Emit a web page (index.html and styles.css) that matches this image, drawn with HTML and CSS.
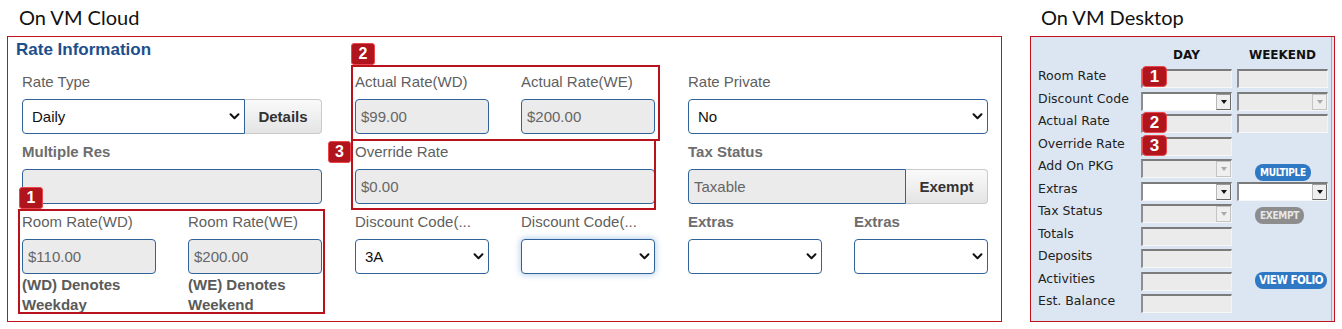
FILE: index.html
```html
<!DOCTYPE html>
<html lang="en">
<head>
    <meta charset="UTF-8">
    <title>Rate Information</title>
    <link rel="stylesheet" href="styles.css">
</head>
<body>
    <div class="page">
        <!-- Cloud version -->
        <section class="cloud">
            <h2 class="caption">On VM Cloud</h2>
            <div class="cloud-panel">
                <h3 class="panel-title">Rate Information</h3>

                <div class="cloud-grid">
                    <div class="col">
                        <div class="field">
                            <label>Rate Type</label>
                            <div class="combo">
                                <div class="select"><span>Daily</span><svg class="chev" viewBox="0 0 12 8"><path d="M1.5 1.5 6 6l4.5-4.5"/></svg></div>
                                <button class="addon">Details</button>
                            </div>
                        </div>
                        <div class="field">
                            <label class="strong">Multiple Res</label>
                            <div class="input"></div>
                        </div>
                        <div class="pair">
                            <div class="field">
                                <label>Room Rate(WD)</label>
                                <div class="input">$110.00</div>
                                <p class="note">(WD) Denotes Weekday</p>
                            </div>
                            <div class="field">
                                <label>Room Rate(WE)</label>
                                <div class="input">$200.00</div>
                                <p class="note">(WE) Denotes Weekend</p>
                            </div>
                        </div>
                    </div>

                    <div class="col">
                        <div class="pair">
                            <div class="field">
                                <label>Actual Rate(WD)</label>
                                <div class="input">$99.00</div>
                            </div>
                            <div class="field">
                                <label>Actual Rate(WE)</label>
                                <div class="input">$200.00</div>
                            </div>
                        </div>
                        <div class="field">
                            <label>Override Rate</label>
                            <div class="input">$0.00</div>
                        </div>
                        <div class="pair">
                            <div class="field">
                                <label>Discount Code(...</label>
                                <div class="select"><span>3A</span><svg class="chev" viewBox="0 0 12 8"><path d="M1.5 1.5 6 6l4.5-4.5"/></svg></div>
                            </div>
                            <div class="field">
                                <label>Discount Code(...</label>
                                <div class="select glow"><span></span><svg class="chev" viewBox="0 0 12 8"><path d="M1.5 1.5 6 6l4.5-4.5"/></svg></div>
                            </div>
                        </div>
                    </div>

                    <div class="col">
                        <div class="field">
                            <label>Rate Private</label>
                            <div class="select"><span>No</span><svg class="chev" viewBox="0 0 12 8"><path d="M1.5 1.5 6 6l4.5-4.5"/></svg></div>
                        </div>
                        <div class="field">
                            <label class="strong">Tax Status</label>
                            <div class="combo">
                                <div class="input">Taxable</div>
                                <button class="addon wide">Exempt</button>
                            </div>
                        </div>
                        <div class="pair">
                            <div class="field">
                                <label class="strong">Extras</label>
                                <div class="select"><span></span><svg class="chev" viewBox="0 0 12 8"><path d="M1.5 1.5 6 6l4.5-4.5"/></svg></div>
                            </div>
                            <div class="field">
                                <label class="strong">Extras</label>
                                <div class="select"><span></span><svg class="chev" viewBox="0 0 12 8"><path d="M1.5 1.5 6 6l4.5-4.5"/></svg></div>
                            </div>
                        </div>
                    </div>
                </div>

                <!-- Callouts -->
                <div class="mark mark-1"></div>
                <div class="badge badge-1">1</div>
                <div class="mark mark-2"></div>
                <div class="badge badge-2">2</div>
                <div class="mark mark-3"></div>
                <div class="badge badge-3">3</div>
            </div>
        </section>

        <!-- Desktop version -->
        <section class="desk">
            <h2 class="caption desk-caption">On VM Desktop</h2>
            <div class="desk-panel">
                <div class="desk-inner">
                    <div class="desk-grid">
                        <div></div>
                        <div class="head">DAY</div>
                        <div class="head">WEEKEND</div>

                        <div class="row-label">Room Rate</div>
                        <div class="box"></div>
                        <div class="box"></div>

                        <div class="row-label">Discount Code</div>
                        <div class="box drop on"><span class="arrow"></span></div>
                        <div class="box drop"><span class="arrow"></span></div>

                        <div class="row-label">Actual Rate</div>
                        <div class="box"></div>
                        <div class="box"></div>

                        <div class="row-label">Override Rate</div>
                        <div class="box"></div>
                        <div></div>

                        <div class="row-label">Add On PKG</div>
                        <div class="box drop"><span class="arrow"></span></div>
                        <div><span class="pill pill-multiple">MULTIPLE</span></div>

                        <div class="row-label">Extras</div>
                        <div class="box drop on"><span class="arrow"></span></div>
                        <div class="box drop on"><span class="arrow"></span></div>

                        <div class="row-label">Tax Status</div>
                        <div class="box drop"><span class="arrow"></span></div>
                        <div><span class="pill pill-exempt">EXEMPT</span></div>

                        <div class="row-label">Totals</div>
                        <div class="box"></div>
                        <div></div>

                        <div class="row-label">Deposits</div>
                        <div class="box"></div>
                        <div></div>

                        <div class="row-label">Activities</div>
                        <div class="box"></div>
                        <div><span class="pill pill-folio">VIEW FOLIO</span></div>

                        <div class="row-label">Est. Balance</div>
                        <div class="box"></div>
                        <div></div>
                    </div>
                </div>

                <div class="badge dbadge dbadge-1">1</div>
                <div class="badge dbadge dbadge-2">2</div>
                <div class="badge dbadge dbadge-3">3</div>
            </div>
        </section>
    </div>
</body>
</html>
```

FILE: styles.css
```css
body {
    margin: 0;
    background: #fff;
    font-family: "Liberation Sans", Arial, sans-serif;
}

.page {
    display: flex;
    gap: 28px;
    padding-left: 7px;
}

.caption {
    margin: 0;
    height: 36px;
    line-height: 34px;
    padding-left: 12px;
    font-family: Lato, sans-serif;
    font-size: 20px;
    font-weight: normal;
    color: #111;
}

.desk-caption {
    padding-left: 11px;
}

/* Cloud panel */
.cloud-panel {
    position: relative;
    width: 995px;
    box-sizing: border-box;
    border: 1px solid #c1121c;
    padding: 3px 13px 6px 14px;
}

.panel-title {
    margin: 0 0 13px -6px;
    font-size: 17px;
    line-height: 20px;
    font-weight: bold;
    color: #1d4f8c;
}

.cloud-grid {
    display: grid;
    grid-template-columns: repeat(3, 300px);
    column-gap: 33px;
    align-items: start;
}

.pair {
    display: grid;
    grid-template-columns: 134px 134px;
    column-gap: 32px;
}

.field {
    margin-bottom: 9px;
}

.pair .field {
    margin-bottom: 0;
}

.pair + .field,
.pair + .pair {
    margin-top: 9px;
}

.field label {
    display: block;
    height: 18px;
    line-height: 18px;
    margin-bottom: 8px;
    font-size: 15px;
    color: #5f5f5f;
    white-space: nowrap;
}

.field label.strong {
    font-weight: bold;
    color: #6d6d6d;
}

.input,
.select {
    height: 35px;
    box-sizing: border-box;
    border: 1px solid #31639b;
    border-radius: 4px;
    font-size: 15px;
}

.input {
    padding: 0 5px;
    line-height: 33px;
    background: #ebebeb;
    color: #666;
}

.select {
    display: flex;
    align-items: center;
    justify-content: space-between;
    padding: 0 4px 0 9px;
    background: #fff;
    color: #111;
}

.select.glow {
    box-shadow: 0 0 6px 1px rgba(95, 150, 215, 0.45);
}

.chev {
    width: 11px;
    height: 7px;
}

.chev path {
    fill: none;
    stroke: #111;
    stroke-width: 2.3;
    stroke-linecap: round;
    stroke-linejoin: round;
}

.combo {
    display: flex;
}

.combo .select,
.combo .input {
    flex: 1;
    border-radius: 4px 0 0 4px;
}

.addon {
    width: 77px;
    height: 35px;
    border: 1px solid #cacaca;
    border-left: none;
    border-radius: 0 4px 4px 0;
    background: linear-gradient(#fafafa, #e4e4e4);
    font: bold 15px "Liberation Sans", Arial, sans-serif;
    color: #333;
}

.addon.wide {
    width: 82px;
}

.note {
    margin: 1px 0 0;
    font-size: 15px;
    line-height: 20px;
    font-weight: bold;
    color: #5a5a5a;
}

/* Callouts */
.mark {
    position: absolute;
    box-sizing: border-box;
    border: 2px solid #b8121c;
}

.mark-1 { left: 10px; top: 172px; width: 307px; height: 105px; }
.mark-2 { left: 343px; top: 28px; width: 309px; height: 76px; }
.mark-3 { left: 343px; top: 102px; width: 305px; height: 71px; }

.badge {
    position: absolute;
    width: 24px;
    height: 22px;
    box-sizing: border-box;
    border: 1px solid #ea474d;
    border-radius: 3px;
    background: #b0141c;
    color: #fff;
    font: bold 16px/20px "Liberation Sans", Arial, sans-serif;
    text-align: center;
}

.badge-1 { left: 11px; top: 150px; }
.badge-2 { left: 343px; top: 6px; }
.badge-3 { left: 320px; top: 104px; width: 23px; }

/* Desktop panel */
.desk-panel {
    position: relative;
    width: 305px;
    box-sizing: border-box;
    border: 1px solid #c1121c;
    background: #dce6f2;
    padding-right: 2px;
}

.desk-inner {
    padding: 8px 3px 8px 7px;
    border-right: 1px solid #98adc6;
}

.desk-grid {
    display: grid;
    grid-template-columns: 98px 91px 91px;
    grid-template-rows: 20px repeat(11, 22.5px);
    column-gap: 5px;
    font-family: "DejaVu Sans", Verdana, sans-serif;
    font-size: 12.5px;
    color: #222;
}

.head {
    font-size: 12px;
    font-weight: bold;
    line-height: 20px;
    text-align: center;
    color: #111;
}

.row-label {
    line-height: 22.5px;
    white-space: nowrap;
}

.box {
    display: flex;
    justify-content: flex-end;
    height: 19px;
    margin-top: 4px;
    box-sizing: border-box;
    background: #ebebeb;
    border-top: 2px solid #7b7b7b;
    border-left: 2px solid #8e8e8e;
    border-right: 1px solid #f3f3f3;
    border-bottom: 1px solid #f7f7f7;
}

.drop.on {
    background: #fff;
}

.arrow {
    display: flex;
    align-items: center;
    justify-content: center;
    width: 15px;
    box-sizing: border-box;
    background: #efefef;
    border: 1px solid #c4c4c4;
}

.arrow::before {
    content: "";
    border-left: 3.5px solid transparent;
    border-right: 3.5px solid transparent;
    border-top: 4px solid #a8a8a8;
}

.drop.on .arrow {
    border-color: #9a9a9a #6a6a6a #6a6a6a #b8b8b8;
}

.drop.on .arrow::before {
    border-top-color: #111;
}

.pill {
    display: inline-block;
    height: 17px;
    margin-left: 18px;
    padding: 0 5px;
    border-radius: 8px;
    background: #2f78c3;
    color: #fff;
    font-family: "DejaVu Sans Condensed", "DejaVu Sans", sans-serif;
    font-size: 10px;
    font-weight: bold;
    letter-spacing: -0.3px;
    line-height: 17px;
    white-space: nowrap;
}

.pill-multiple { margin-top: 9px; }
.pill-exempt { margin-top: 7px; background: #8d8d8d; color: #e6e6e6; }
.pill-folio { margin-top: 4.5px; font-size: 11.5px; letter-spacing: -0.5px; padding: 0 4px; }

.dbadge {
    width: 25px;
    height: 21px;
    border-radius: 4px;
    line-height: 19px;
    font-size: 17px;
}

.dbadge-1 { left: 111px; top: 29px; }
.dbadge-2 { left: 111px; top: 75px; }
.dbadge-3 { left: 111px; top: 98px; }
```
